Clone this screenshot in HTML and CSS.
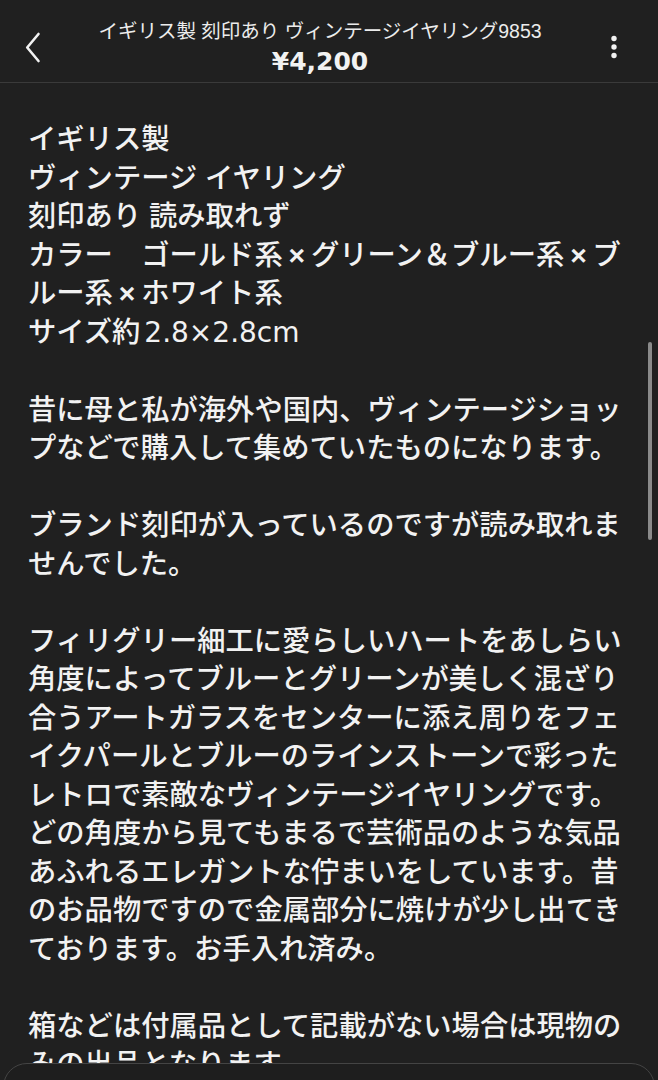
FILE: index.html
```html
<!DOCTYPE html>
<html lang="ja">
<head>
<meta charset="utf-8">
<title>イギリス製 刻印あり ヴィンテージイヤリング9853</title>
<link rel="stylesheet" href="styles.css">
</head>
<body>
<div class="screen">
  <header class="topbar">
    <button class="icon-btn back" aria-label="戻る">
      <svg width="18" height="31" viewBox="0 0 18 31"><path d="M14.5 2 L3.2 15.5 L14.5 29" fill="none" stroke="#f2f2f2" stroke-width="2.6" stroke-linecap="round" stroke-linejoin="round"/></svg>
    </button>
    <div class="titles">
      <div class="title">イギリス製 刻印あり ヴィンテージイヤリング9853</div>
      <div class="price">¥4,200</div>
    </div>
    <button class="icon-btn more" aria-label="メニュー">
      <svg width="8" height="24" viewBox="0 0 8 24"><circle cx="4" cy="3.5" r="2.7" fill="#f2f2f2"/><circle cx="4" cy="12" r="2.7" fill="#f2f2f2"/><circle cx="4" cy="20.5" r="2.7" fill="#f2f2f2"/></svg>
    </button>
  </header>
  <main class="content">
    <p>イギリス製<br>ヴィンテージ イヤリング<br>刻印あり 読み取れず<br>カラー　ゴールド系<span class="mul">×</span>グリーン＆ブルー系<span class="mul">×</span>ブルー系<span class="mul">×</span>ホワイト系<br>サイズ約<span class="num">2.8×2.8cm</span></p>
    <p>昔に母と私が海外や国内、ヴィンテージショップなどで購入して集めていたものになります。</p>
    <p>ブランド刻印が入っているのですが読み取れませんでした。</p>
    <p>フィリグリー細工に愛らしいハートをあしらい角度によってブルーとグリーンが美しく混ざり合うアートガラスをセンターに添え周りをフェイクパールとブルーのラインストーンで彩ったレトロで素敵なヴィンテージイヤリングです。どの角度から見てもまるで芸術品のような気品あふれるエレガントな佇まいをしています。昔のお品物ですので金属部分に焼けが少し出てきております。お手入れ済み。</p>
    <p>箱などは付属品として記載がない場合は現物のみの出品となります。</p>
  </main>
  <div class="scrollbar"></div>
  <div class="sheet"></div>
</div>
</body>
</html>
```
FILE: styles.css
```css
html, body {
  margin: 0;
  padding: 0;
  background: #202020;
}
.screen {
  position: relative;
  width: 658px;
  height: 1080px;
  overflow: hidden;
  background: #202020;
  color: #f2f2f2;
  font-family: "Liberation Sans", "Noto Sans CJK JP", sans-serif;
}
.topbar {
  display: grid;
  grid-template-columns: 64px 1fr 82px;
  height: 82px;
  border-bottom: 1px solid #3a3a3a;
}
.icon-btn {
  background: none;
  border: 0;
  padding: 0;
  display: flex;
  align-items: center;
  height: 100%;
  box-sizing: border-box;
  cursor: pointer;
}
.back {
  padding-left: 24px;
  padding-top: 12px;
}
.more {
  padding-left: 34px;
  padding-top: 12px;
}
.titles {
  display: flex;
  flex-direction: column;
  align-items: center;
  padding-top: 18px;
}
.title {
  font-size: 19.5px;
  line-height: 26px;
  color: #ececec;
  white-space: nowrap;
}
.price {
  font-family: "DejaVu Sans", "Noto Sans CJK JP", sans-serif;
  font-size: 25px;
  line-height: 35px;
  font-weight: 700;
  color: #f2f2f2;
}
.content {
  padding: 37px 30px 0 28px;
  font-size: 28.3px;
  line-height: 38.5px;
  font-weight: 500;
}
.content p {
  margin: 0 0 38.5px;
}
.mul {
  display: inline-block;
  width: 1em;
  line-height: 1;
  text-align: center;
  font-family: "Liberation Sans", sans-serif;
  font-weight: 700;
}
.num {
  font-family: "DejaVu Sans", sans-serif;
  font-size: 28px;
  font-weight: 400;
  margin-left: 4px;
}
.scrollbar {
  position: absolute;
  left: 648px;
  top: 342px;
  width: 4px;
  height: 198px;
  border-radius: 2px;
  background: #8a8a8a;
}
.sheet {
  position: absolute;
  left: 3px;
  right: 3px;
  top: 1063px;
  height: 60px;
  background: #1e1e1e;
  border: 1px solid #444;
  border-radius: 24px 24px 0 0;
}
```
